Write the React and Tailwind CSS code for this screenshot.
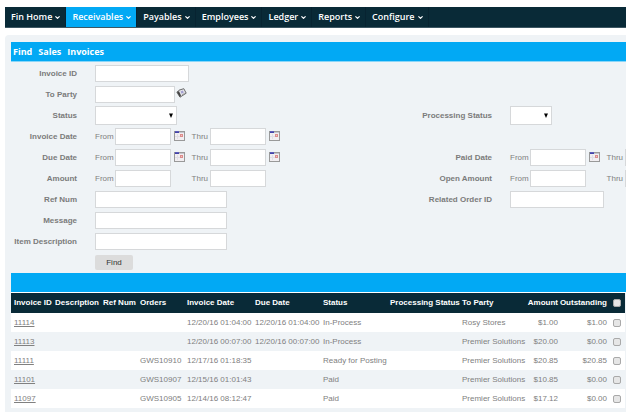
import React, { useState } from 'react';
import { ChevronDown } from 'lucide-react';

const menuItems = ['Fin Home', 'Receivables', 'Payables', 'Employees', 'Ledger', 'Reports', 'Configure'];

const invoices = [
  { id: '11114', orders: '', invoiceDate: '12/20/16 01:04:00', dueDate: '12/20/16 01:04:00', status: 'In-Process', party: 'Rosy Stores', amount: '$1.00', outstanding: '$1.00' },
  { id: '11113', orders: '', invoiceDate: '12/20/16 00:07:00', dueDate: '12/20/16 00:07:00', status: 'In-Process', party: 'Premier Solutions', amount: '$20.00', outstanding: '$0.00' },
  { id: '11111', orders: 'GWS10910', invoiceDate: '12/17/16 01:18:35', dueDate: '', status: 'Ready for Posting', party: 'Premier Solutions', amount: '$20.85', outstanding: '$20.85' },
  { id: '11101', orders: 'GWS10907', invoiceDate: '12/15/16 01:01:43', dueDate: '', status: 'Paid', party: 'Premier Solutions', amount: '$10.85', outstanding: '$0.00' },
  { id: '11097', orders: 'GWS10905', invoiceDate: '12/14/16 08:12:47', dueDate: '', status: 'Paid', party: 'Premier Solutions', amount: '$17.12', outstanding: '$0.00' },
];

const inputClass = 'h-[17px] shrink-0 border border-[#d6d8da] bg-white px-1 outline-none';

const CalendarIcon = () => (
  <svg width="11" height="10" viewBox="0 0 11 10" shapeRendering="crispEdges">
    <rect width="11" height="10" fill="#999" />
    <rect x="1" y="1" width="9" height="8" fill="#f1eef1" />
    <rect x="1" width="4" height="1" fill="#5c5cb8" />
    <rect x="1" y="1" width="4" height="1" fill="#4242a8" />
    <rect x="5" y="1" width="5" height="1" fill="#c4c4cc" />
    <rect x="3" y="3" width="1" height="5" fill="#e0dee5" />
    <rect x="1" y="5" width="5" height="1" fill="#e0dee5" />
    <rect x="6" y="3" width="3" height="3" fill="#dc8c8c" />
    <rect x="7" y="4" width="1" height="1" fill="#f0c4c4" />
  </svg>
);

const LookupIcon = () => (
  <svg width="11" height="10" viewBox="0 0 11 10">
    <path d="M3 2.2 7.8.7 10.2 5.2 4 9.2 1 4.4Z" fill="#e6e6ea" stroke="#5a5a5a" strokeWidth="0.9" />
    <path d="M.8 3.8 3 3.2 5 7.4 3.9 9Z" fill="#444" />
    <path d="M4.6 3.6 6.8 2.6 7.8 4.6 5.6 5.7Z" fill="#a29ed0" />
    <path d="M6 6.9 8.8 5.2" stroke="#888" strokeWidth="0.7" />
  </svg>
);

const Label = ({ htmlFor, children }) => (
  <label htmlFor={htmlFor} className="flex justify-end font-bold whitespace-nowrap text-[#7b7b7b]">
    {children}
  </label>
);

const TextField = ({ id, width }) => <input id={id} type="text" className={`${inputClass} ${width}`} />;

const SelectField = ({ id, width }) => (
  <div className={`relative ${width}`}>
    <select id={id} className="block h-[19px] w-full appearance-none border border-[#d6d8da] bg-white px-1 outline-none">
      <option></option>
    </select>
    <svg className="pointer-events-none absolute top-[7px] right-1" width="4" height="5" viewBox="0 0 4 5">
      <path d="M0 0.5H4L2 5Z" fill="#000" />
    </svg>
  </div>
);

const RangeField = ({ id, calendar }) => (
  <div className="flex items-center">
    <label htmlFor={`${id}-from`} className="w-5 shrink-0">From</label>
    <input id={`${id}-from`} type="text" className={`${inputClass} w-14`} />
    {calendar && (
      <button type="button" aria-label="Pick from date" className="ml-[3px] shrink-0 pb-[2px]">
        <CalendarIcon />
      </button>
    )}
    <label htmlFor={`${id}-thru`} className={`shrink-0 pr-[2px] text-right ${calendar ? 'w-[25px]' : 'w-[39px]'}`}>Thru</label>
    <input id={`${id}-thru`} type="text" className={`${inputClass} w-14`} />
    {calendar && (
      <button type="button" aria-label="Pick thru date" className="ml-[3px] shrink-0 pb-[2px]">
        <CalendarIcon />
      </button>
    )}
  </div>
);

const FindForm = () => (
  <form
    onSubmit={(e) => e.preventDefault()}
    className="grid auto-rows-[21px] grid-cols-[66px_1fr_66px_116px] items-center gap-x-[18px] overflow-hidden pt-px"
  >
    <Label htmlFor="invoiceId">Invoice ID</Label>
    <TextField id="invoiceId" width="w-[94px]" />
    <span className="col-span-2" />

    <Label htmlFor="toParty">To Party</Label>
    <div className="flex items-center gap-px">
      <TextField id="toParty" width="w-20" />
      <button type="button" aria-label="Look up party" className="pb-1">
        <LookupIcon />
      </button>
    </div>
    <span className="col-span-2" />

    <Label htmlFor="status">Status</Label>
    <SelectField id="status" width="w-[82px]" />
    <Label htmlFor="processingStatus">Processing Status</Label>
    <SelectField id="processingStatus" width="w-[42px]" />

    <Label htmlFor="invoiceDate-from">Invoice Date</Label>
    <RangeField id="invoiceDate" calendar />
    <span className="col-span-2" />

    <Label htmlFor="dueDate-from">Due Date</Label>
    <RangeField id="dueDate" calendar />
    <Label htmlFor="paidDate-from">Paid Date</Label>
    <RangeField id="paidDate" calendar />

    <Label htmlFor="amount-from">Amount</Label>
    <RangeField id="amount" />
    <Label htmlFor="openAmount-from">Open Amount</Label>
    <RangeField id="openAmount" />

    <Label htmlFor="refNum">Ref Num</Label>
    <TextField id="refNum" width="w-[132px]" />
    <Label htmlFor="relatedOrderId">Related Order ID</Label>
    <TextField id="relatedOrderId" width="w-[94px]" />

    <Label htmlFor="message">Message</Label>
    <TextField id="message" width="w-[132px]" />
    <span className="col-span-2" />

    <Label htmlFor="itemDescription">Item Description</Label>
    <TextField id="itemDescription" width="w-[132px]" />
    <span className="col-span-2" />

    <button type="submit" className="col-start-2 h-[15px] w-[38px] rounded-xs bg-[#dcdcdc] text-[#333]">
      Find
    </button>
  </form>
);

const InvoiceTable = () => {
  const [selected, setSelected] = useState([]);
  const allSelected = selected.length === invoices.length;

  const toggle = (id) => {
    setSelected(selected.includes(id) ? selected.filter((s) => s !== id) : [...selected, id]);
  };

  const checkboxClass = 'block size-2 appearance-none rounded-xs border border-[#a9a9a9] bg-[#e6e6e6] checked:bg-[#02a9f4]';

  return (
    <table className="w-full table-fixed whitespace-nowrap">
      <thead>
        <tr className="h-5 bg-[#092a37] text-left text-white">
          <th className="w-[41px] pl-[3px]">Invoice ID</th>
          <th className="w-[48px] pl-[3px]">Description</th>
          <th className="w-[37px] pl-[3px]">Ref Num</th>
          <th className="w-[47px] pl-[3px]">Orders</th>
          <th className="w-[68px] pl-[3px]">Invoice Date</th>
          <th className="w-[68px] pl-[3px]">Due Date</th>
          <th className="w-[67px] pl-[3px]">Status</th>
          <th className="w-[72px] pl-[3px]">Processing Status</th>
          <th className="pl-[3px]">To Party</th>
          <th className="w-[31px] text-right">Amount</th>
          <th className="w-[49px] text-right">Outstanding</th>
          <th className="w-[18px] pl-[6px]">
            <input
              type="checkbox"
              aria-label="Select all"
              checked={allSelected}
              onChange={() => setSelected(allSelected ? [] : invoices.map((i) => i.id))}
              className={checkboxClass}
            />
          </th>
        </tr>
      </thead>
      <tbody>
        {invoices.map((inv) => (
          <tr key={inv.id} className="h-[19px] odd:bg-white">
            <td className="pl-[3px]">
              <a href="#" className="underline">{inv.id}</a>
            </td>
            <td></td>
            <td></td>
            <td className="pl-[3px]">{inv.orders}</td>
            <td className="pl-[3px]">{inv.invoiceDate}</td>
            <td className="pl-[3px]">{inv.dueDate}</td>
            <td className="pl-[3px]">{inv.status}</td>
            <td></td>
            <td className="pl-[3px]">{inv.party}</td>
            <td className="text-right">{inv.amount}</td>
            <td className="text-right">{inv.outstanding}</td>
            <td className="pl-[6px]">
              <input
                type="checkbox"
                aria-label={`Select ${inv.id}`}
                checked={selected.includes(inv.id)}
                onChange={() => toggle(inv.id)}
                className={checkboxClass}
              />
            </td>
          </tr>
        ))}
      </tbody>
    </table>
  );
};

const App = () => {
  return (
    <div className="overflow-hidden bg-white pt-[7px] pr-[2px] pl-[5px] font-['Liberation_Sans',Arial,sans-serif] text-[8px] leading-[10px] text-[#808080]">
      <nav className="flex h-[21px] border-b border-[#3d5763] bg-[#092a37] font-['Open_Sans',sans-serif] text-[9px] font-semibold text-white">
        {menuItems.map((item) => (
          <a
            key={item}
            href="#"
            className={`flex items-center gap-[2px] border-r border-[#072331] pr-1 pl-[6px] whitespace-nowrap ${item === 'Receivables' ? 'bg-[#02a9f4]' : ''}`}
          >
            {item}
            <ChevronDown size={7} strokeWidth={4} />
          </a>
        ))}
      </nav>

      <main className="mt-[7px] rounded-tl bg-[#eff3f6] pt-[7px] pb-1 pl-[6px]">
        <h1 className="flex h-5 items-center gap-[6px] border-b border-[#8ad6f8] bg-[#02a9f4] pl-[2px] font-['Open_Sans',sans-serif] text-[9px] font-bold text-white">
          <span>Find</span>
          <span>Sales</span>
          <span>Invoices</span>
        </h1>
        <FindForm />
        <div className="h-5 border-b border-white bg-[#02a9f4]" />
        <div className="pr-px">
          <InvoiceTable />
        </div>
      </main>
    </div>
  );
};

export default App;
